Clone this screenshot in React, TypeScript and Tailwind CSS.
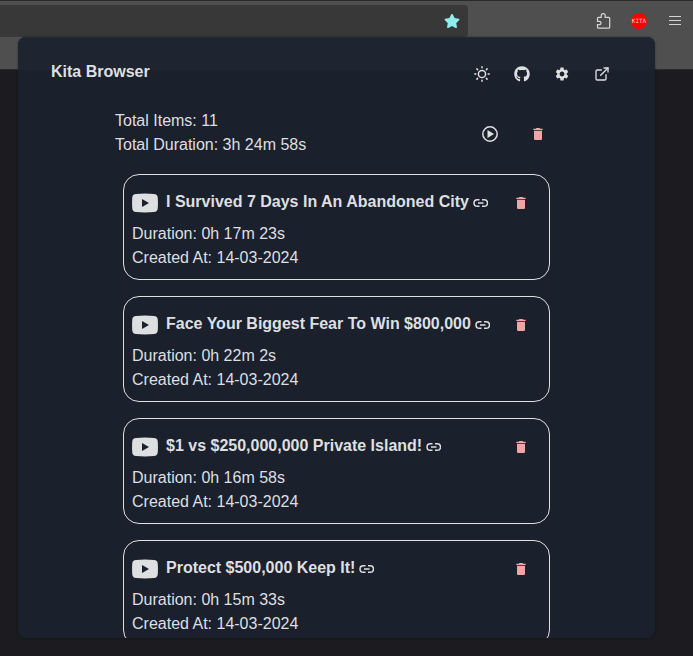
import React from "react";
import { MdDelete, MdSettings } from "react-icons/md";
import { FiExternalLink } from "react-icons/fi";
import { FaGithub, FaStar } from "react-icons/fa";

const items = [
  { title: "I Survived 7 Days In An Abandoned City", duration: "0h 17m 23s" },
  { title: "Face Your Biggest Fear To Win $800,000", duration: "0h 22m 2s" },
  { title: "$1 vs $250,000,000 Private Island!", duration: "0h 16m 58s" },
  { title: "Protect $500,000 Keep It!", duration: "0h 15m 33s" },
];

function SunIcon() {
  return (
    <svg className="size-4" viewBox="0 0 16 16" fill="none" stroke="currentColor" strokeWidth="1.5" strokeLinecap="round">
      <circle cx="8" cy="8" r="3.6" />
      <path d="M8 .8v1M8 14.2v1M.8 8h1M14.2 8h1M2.900 2.900l.7.7M12.400 12.400l.7.7M2.900 13.100l.7-.7M12.400 3.600l.7-.7" />
    </svg>
  );
}

function PlayIcon() {
  return (
    <svg className="mt-[-2px] mr-8 ml-auto size-4" viewBox="0 0 16 16">
      <circle cx="8" cy="8" r="7.2" fill="none" stroke="currentColor" strokeWidth="1.5" />
      <path d="M5.5 4v8L12 8z" fill="currentColor" />
    </svg>
  );
}

function LinkIcon() {
  return (
    <svg className="mt-px ml-1 h-4 w-[15px] shrink-0" viewBox="0 0 15 16" fill="none" stroke="currentColor" strokeWidth="1.5">
      <path d="M6.500 4.700H4.300a3.300 3.300 0 0 0 0 6.600h2.200M9 4.700h2.200a3.300 3.300 0 0 1 0 6.600H9M5 8h5.500" />
    </svg>
  );
}

function YoutubeIcon() {
  return (
    <svg className="mt-[2px] h-5 w-[26px] shrink-0" viewBox="0 0 26 20" fill="currentColor">
      <path fillRule="evenodd" d="M4 1Q13 .2 22 1q3.4.2 3.7 3.2.5 5.8 0 11.6-.3 3-3.7 3.2-9 .8-18 0-3.4-.2-3.7-3.2-.5-5.8 0-11.6Q.6 1.200 4 1zM10 6v8l7-4z" />
    </svg>
  );
}

function Toolbar() {
  return (
    <div className="flex h-[70px] items-start border-t border-b border-t-[#2b2a2d] border-b-[#2b2a2d] bg-[#4f4f4f] pt-1">
      <div className="flex h-8 w-[468px] items-center justify-end rounded-r bg-[#383838] pr-2 text-[#8eeeee]">
        <FaStar size={16} />
      </div>
      <div className="ml-auto flex h-8 items-center pr-[10px] text-[#d4d4d4]">
        <svg className="mr-[19px] size-4" viewBox="0 0 16 16" fill="none" stroke="currentColor" strokeWidth="1.25">
          <path d="M5.200 4.300V2.600a2 2 0 0 1 4 0v1.700h3.500a1 1 0 0 1 1 1v8.900a1 1 0 0 1-1 1H2.500a1 1 0 0 1-1-1v-2.700h1.900a1.600 1.600 0 0 0 0-3.200H1.500V5.300a1 1 0 0 1 1-1z" />
        </svg>
        <div className="mr-5 flex size-4 items-center justify-center rounded-full bg-[#ff0000] font-['DejaVu_Sans_Mono',monospace] text-[6px] leading-none text-[#ffd0d0]">KITA</div>
        <svg className="size-4" viewBox="0 0 16 16" stroke="currentColor" strokeWidth="1">
          <path d="M2 3.500h12M2 7.500h12M2 11.500h12" />
        </svg>
      </div>
    </div>
  );
}

function Card({ title, duration }: { title: string; duration: string }) {
  return (
    <article className="h-[106px] w-[427px] shrink-0 rounded-2xl border border-[#dedfe1] px-2 pt-[15px] leading-6">
      <div className="flex h-6 items-center">
        <YoutubeIcon />
        <h2 className="ml-2 text-base font-bold whitespace-nowrap">{title}</h2>
        <LinkIcon />
        <MdDelete size={16} className="mt-0.5 mr-3 ml-auto shrink-0 text-[#f0a5a5]" />
      </div>
      <p className="mt-2">Duration: {duration}</p>
      <p>Created At: 14-03-2024</p>
    </article>
  );
}

export default function App() {
  return (
    <div className="relative h-[656px] w-full overflow-hidden bg-[#1c1b20] font-['Liberation_Sans',Arial,sans-serif] text-base text-[#dedfe1]">
      <Toolbar />
      <main className="absolute top-[37px] left-[18px] h-[601px] w-[637px] overflow-hidden rounded-lg bg-[#1b212c] shadow-[0_0_3px_#0005]">
        <header className="flex h-[74px] items-center border-t border-[#252a34] bg-[linear-gradient(#1f2530_32px,#1b212c_32px)] pr-[45px] pl-[33px]">
          <h1 className="mb-[6px] font-bold">Kita Browser</h1>
          <nav className="mb-[2px] ml-auto flex gap-6">
            <SunIcon />
            <FaGithub size={16} />
            <MdSettings size={16} />
            <FiExternalLink size={16} />
          </nav>
        </header>
        <section className="flex h-12 items-center pr-[109px] pl-[97px] leading-6">
          <div className="mt-[-4px]">
            <p>Total Items: 11</p>
            <p>Total Duration: 3h 24m 58s</p>
          </div>
          <PlayIcon />
          <MdDelete size={16} className="mt-[-2px] text-[#f0a5a5]" />
        </section>
        <section className="mt-[15px] ml-[105px] flex flex-col gap-4">
          {items.map((item) => <Card key={item.title} {...item} />)}
        </section>
      </main>
    </div>
  );
}
